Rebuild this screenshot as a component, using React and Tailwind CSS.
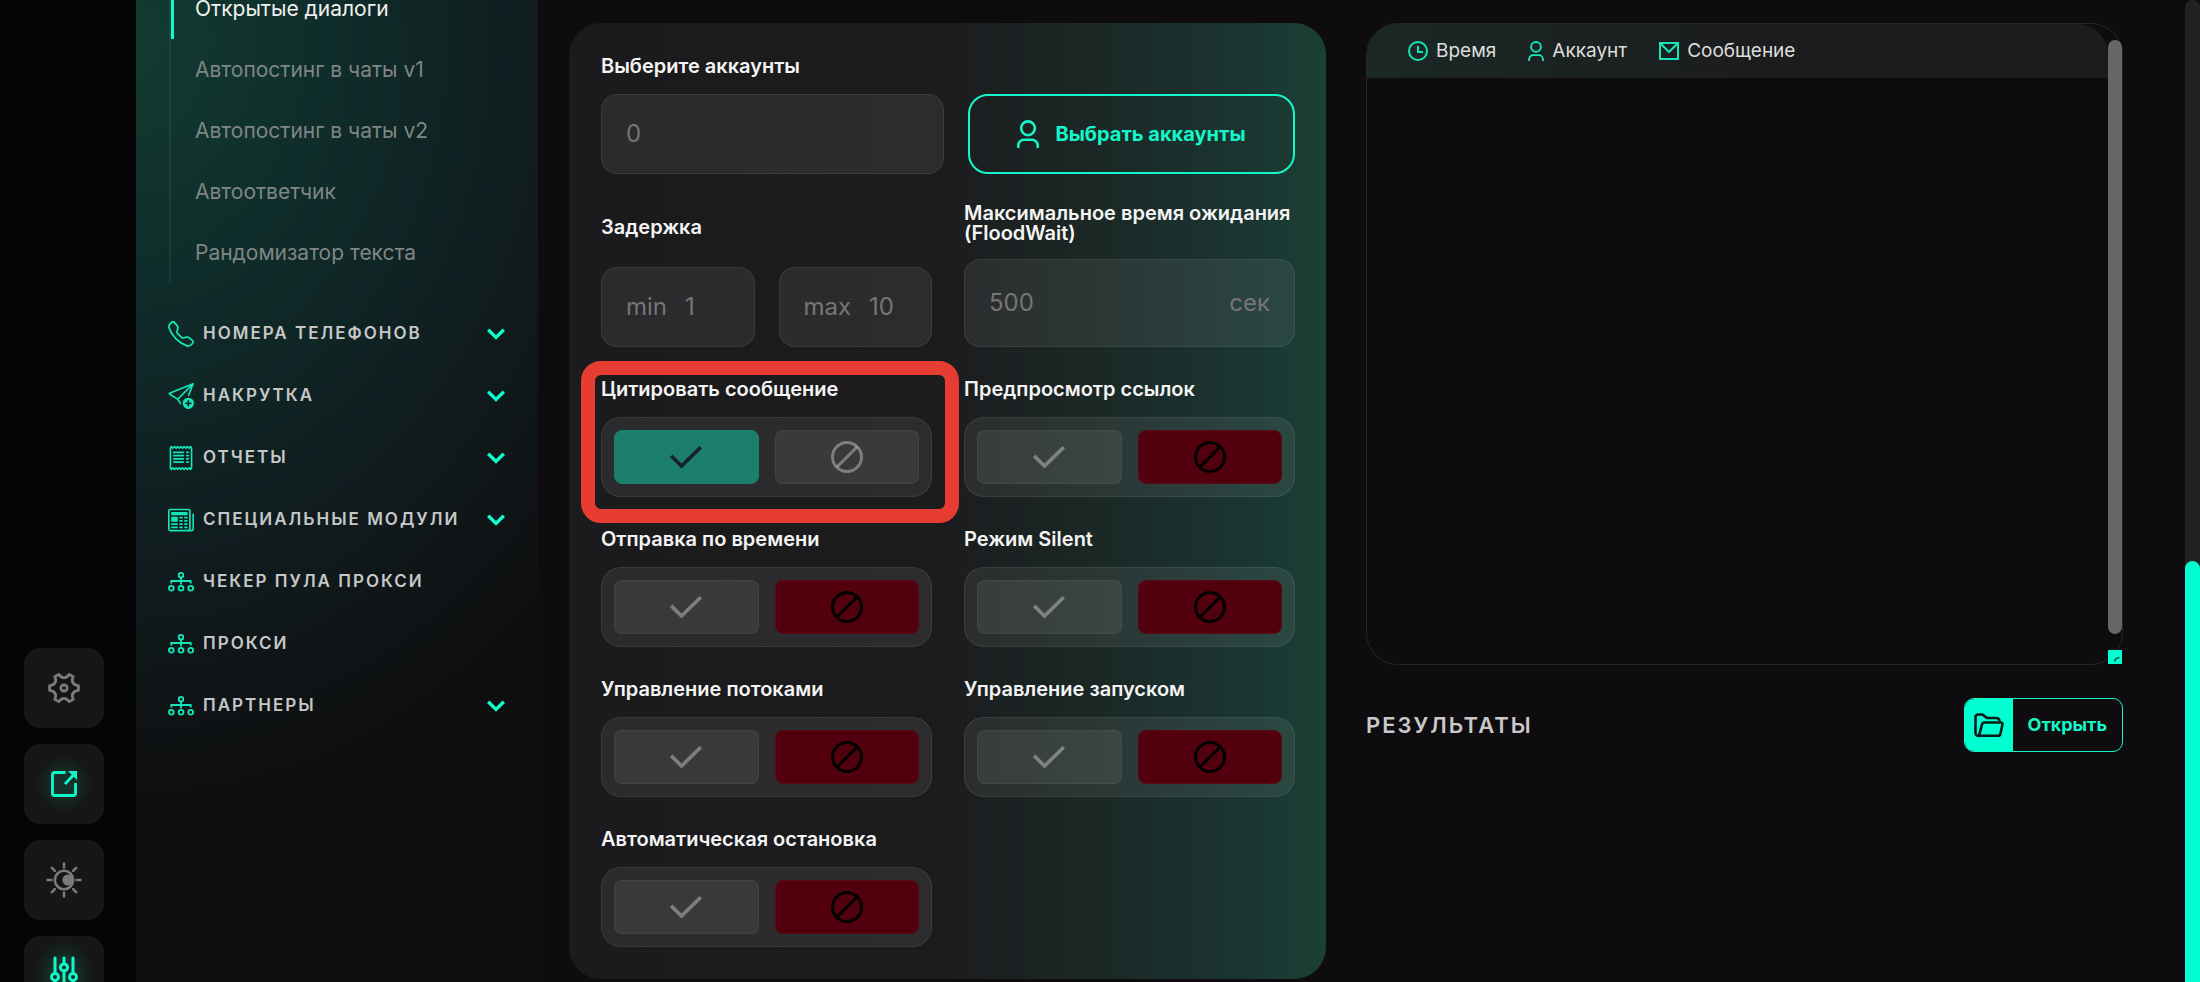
import React, { useState } from 'react';
import clsx from 'clsx';
import { BsNewspaper, BsReceipt, BsSendPlus, BsTelephone } from 'react-icons/bs';

const subItems = [
    'Открытые диалоги',
    'Автопостинг в чаты v1',
    'Автопостинг в чаты v2',
    'Автоответчик',
    'Рандомизатор текста',
];

const OrgIcon = () => (
    <svg viewBox="0 0 26 20" className="w-[26px] h-5" fill="none" stroke="currentColor" strokeWidth="1.8">
        <circle cx="13" cy="3.2" r="2.3" />
        <path d="M13 5.6V12.5M3.3 11.5V9h19.4v2.5" />
        <circle cx="3.3" cy="16.2" r="2.4" />
        <circle cx="13" cy="16.2" r="2.4" />
        <circle cx="22.7" cy="16.2" r="2.4" />
    </svg>
);

const menu = [
    { title: 'Номера телефонов', icon: <BsTelephone className="w-[26px] h-[26px]" />, open: true },
    { title: 'Накрутка', icon: <BsSendPlus className="w-[26px] h-[26px]" />, open: true },
    { title: 'Отчеты', icon: <BsReceipt className="w-[26px] h-[26px]" />, open: true },
    { title: 'Специальные модули', icon: <BsNewspaper className="w-[26px] h-[26px]" />, open: true },
    { title: 'Чекер пула прокси', icon: <OrgIcon /> },
    { title: 'Прокси', icon: <OrgIcon /> },
    { title: 'Партнеры', icon: <OrgIcon />, open: true },
];

const Chevron = () => (
    <svg viewBox="0 0 18 12" className="w-[18px] h-3 shrink-0 text-[#0fffd0]" fill="none" stroke="currentColor" strokeWidth="3.4">
        <path d="M1.2 1.8 9 9.4l7.8-7.6" />
    </svg>
);

const UserIcon = ({ className }) => (
    <svg viewBox="0 0 22 28" className={className} fill="none" stroke="currentColor" strokeWidth="2.6">
        <circle cx="11" cy="8.3" r="6.9" />
        <path d="M1.3 28v-2.500a5.800 5.800 0 0 1 5.800-5.800h7.800a5.800 5.800 0 0 1 5.800 5.800V28" />
    </svg>
);

const ClockIcon = () => (
    <svg viewBox="0 0 20 20" className="w-5 h-5" fill="none" stroke="currentColor" strokeWidth="2">
        <circle cx="10" cy="10" r="9" />
        <path d="M10 5v6h5" />
    </svg>
);

const MailIcon = () => (
    <svg viewBox="0 0 20 18" className="w-5 h-[18px]" fill="none" stroke="currentColor" strokeWidth="2">
        <path d="M1 1h18v16H1zM1.5 1.5 10 10l8.5-8.5" />
    </svg>
);

const CheckIcon = () => (
    <svg viewBox="0 0 32 22" className="w-8 h-[22px]" fill="none" stroke="currentColor" strokeWidth="3.6">
        <path d="M1.2 9.8 11.5 20 30.8 1.2" />
    </svg>
);

const BanIcon = () => (
    <svg viewBox="0 0 32 32" className="w-8 h-8" fill="none" stroke="currentColor" strokeWidth="3">
        <circle cx="16" cy="16" r="14.5" />
        <path d="M6 26 26 6" />
    </svg>
);

const FolderIcon = () => (
    <svg viewBox="0 0 30 25" className="w-[30px] h-[25px]" fill="none" stroke="currentColor" strokeWidth="2.6" strokeLinejoin="round">
        <path d="M5 23a3 3 0 0 1-3.500-3V4A2.500 2.500 0 0 1 4 1.500h4.500L13 5h9a3.500 3.500 0 0 1 3.500 3" />
        <path d="M10.500 9.500H27a1.500 1.500 0 0 1 1.500 1.800l-2 9.200a2.500 2.500 0 0 1-2.500 2.200H5l3-11.200a2.700 2.700 0 0 1 2.500-2z" />
    </svg>
);

// six blunt teeth joined by concave valleys
const polar = (r, deg) => {
    const a = (deg * Math.PI) / 180;
    return `${(16 + r * Math.cos(a)).toFixed(2)} ${(16 + r * Math.sin(a)).toFixed(2)}`;
};
const gearPath = `M${polar(14.6, -9)}${[0, 60, 120, 180, 240, 300]
    .map((t) => `L${polar(14.6, t + 9)}C${polar(9.5, t + 17)} ${polar(9.5, t + 43)} ${polar(14.6, t + 51)}`)
    .join('')}Z`;

const GearIcon = () => (
    <svg viewBox="0 0 32 32" className="w-8 h-8" fill="none" stroke="currentColor" strokeWidth="2.8" strokeLinejoin="round">
        <path d={gearPath} />
        <circle cx="16" cy="16" r="3.2" />
    </svg>
);

const OpenIcon = () => (
    <svg viewBox="0 0 26 26" className="w-[26px] h-[26px]" fill="none" stroke="currentColor" strokeWidth="2.8">
        <path d="M14.5 1.5h-11a2 2 0 0 0-2 2v19a2 2 0 0 0 2 2h19a2 2 0 0 0 2-2V12" />
        <path d="M14 13 23 3.5" />
        <path d="M17 0h9v9z" fill="currentColor" stroke="none" />
    </svg>
);

const SunIcon = () => (
    <svg viewBox="0 0 36 36" className="w-9 h-9" fill="none" stroke="currentColor" strokeWidth="2.6" strokeLinecap="round">
        <circle cx="18" cy="18" r="9.2" />
        <circle cx="22" cy="18" r="5.6" fill="currentColor" stroke="none" />
        <path d="M18 1.500v4M18 30.500v4M1.500 18h4M30.500 18h4M5.800 5.800l3 3M27.200 27.200l3 3M5.800 30.200l3-3M27.200 8.800l3-3" />
    </svg>
);

const SlidersIcon = () => (
    <svg viewBox="0 0 28 40" className="w-7 h-10" fill="none" stroke="currentColor" strokeWidth="3" strokeLinecap="round">
        <path d="M5 2v15M5 25v13M14 2v5.500M14 15v23M23 2v15M23 25v13" />
        <circle cx="5" cy="21" r="3.5" />
        <circle cx="14" cy="11.5" r="3.5" />
        <circle cx="23" cy="21" r="3.5" />
    </svg>
);

const rail = [
    { name: 'Настройки', icon: <GearIcon /> },
    { name: 'Открыть в новом окне', icon: <OpenIcon />, active: true },
    { name: 'Тема', icon: <SunIcon /> },
    { name: 'Параметры', icon: <SlidersIcon />, active: true },
];

const Label = ({ children, ...rest }) => (
    <span className="block text-xl leading-6 font-semibold text-[#f4f4f4]" {...rest}>{children}</span>
);

const box = 'flex items-center rounded-2xl border border-white/8 bg-white/7 px-6 text-2xl text-[#777578]';
const field = 'min-w-0 flex-1 bg-transparent outline-none placeholder:text-[#777578]';

const Toggle = ({ id, label, initial = false, highlighted }) => {
    const [on, setOn] = useState(initial);
    const base = 'flex-1 flex items-center justify-center rounded-lg border cursor-pointer';
    const idle = 'bg-white/7 border-white/5 text-white/35';

    return (
        <div className="relative">
            <Label id={id}>{label}</Label>
            <div
                role="group"
                aria-labelledby={id}
                className="mt-4 h-20 flex gap-4 rounded-[20px] border border-white/8 bg-white/7 p-3"
            >
                <button
                    type="button"
                    aria-label="Включить"
                    aria-pressed={on}
                    onClick={() => setOn(true)}
                    className={clsx(base, on ? 'bg-[#1c7f6c] border-[#1c7f6c] text-[#14222b]' : idle)}
                >
                    <CheckIcon />
                </button>
                <button
                    type="button"
                    aria-label="Выключить"
                    aria-pressed={!on}
                    onClick={() => setOn(false)}
                    className={clsx(base, on ? idle : 'bg-[#52000d] border-[#5c0a16] text-black')}
                >
                    <BanIcon />
                </button>
            </div>
            {highlighted && (
                <div className="absolute z-10 -left-5 -right-[27px] -top-4 -bottom-[26px] rounded-[20px] border-[14px] border-[#e63c31] pointer-events-none" />
            )}
        </div>
    );
};

const Rail = () => (
    <aside className="w-[136px] shrink-0 h-full bg-[#050505] flex flex-col justify-end">
        <div className="flex flex-col gap-4 pl-6 -mb-[34px]">
            {rail.map((item) => (
                <button
                    key={item.name}
                    type="button"
                    aria-label={item.name}
                    className={clsx(
                        'w-20 h-20 rounded-2xl bg-[#161616] flex items-center justify-center',
                        item.active ? 'text-[#14f7c9]' : 'text-[#7b7b7b]'
                    )}
                >
                    <span className={item.active ? 'rounded-full bg-[#14f7c9]/12 shadow-[0_0_16px_6px_rgba(20,247,201,0.14)]' : ''}>
                        {item.icon}
                    </span>
                </button>
            ))}
        </div>
    </aside>
);

const Sidebar = () => (
    <nav className="w-[402px] shrink-0 h-full overflow-hidden bg-[#0f0f10] bg-[radial-gradient(600px_760px_at_0%_4%,#123b30_0%,#0f2e2b_30%,#101c1f_68%,#0f0f10_100%)]">
        <ul className="-mt-[22px] ml-[33px] border-l-2 border-white/5">
            {subItems.map((item, i) => (
                <li key={item}>
                    <a
                        href="#"
                        className={clsx(
                            'flex items-center h-[61px] border-l-3 pl-[21px] text-[21px] leading-none',
                            i === 0 ? 'border-[#14f7c9] text-[#f0f0f0]' : 'border-transparent text-[#7f8685]'
                        )}
                    >
                        {item}
                    </a>
                </li>
            ))}
        </ul>
        <ul className="mt-5 pl-8 pr-[33px]">
            {menu.map((item) => (
                <li key={item.title}>
                    <a href="#" className="flex items-center h-[62px] gap-[9px] text-[#14e6b8]">
                        <span className="w-[26px] flex justify-center">{item.icon}</span>
                        <span className="flex-1 text-[17px] font-semibold tracking-[2px] uppercase text-[#c6c8c8] whitespace-nowrap">
                            {item.title}
                        </span>
                        {item.open && <Chevron />}
                    </a>
                </li>
            ))}
        </ul>
    </nav>
);

const SettingsPanel = () => (
    <form className="rounded-[32px] pl-8 pr-[31px] pt-[31px] pb-8 bg-[linear-gradient(90deg,#1b1a1d_0%,#1c1b1e_48%,#1b2826_70%,#1a3632_90%,#1b4034_100%)]">
        <label htmlFor="accounts"><Label>Выберите аккаунты</Label></label>
        <div className="mt-4 flex gap-6">
            <div className={clsx(box, 'flex-1 min-w-0 h-20')}>
                <input id="accounts" className={field} placeholder="0" />
            </div>
            <button
                type="button"
                className="w-[327px] shrink-0 h-20 rounded-[20px] border-2 border-[#14f7c9] flex items-center justify-center gap-4 text-xl font-bold text-[#14f7c9]"
            >
                <UserIcon className="w-[22px] h-7" />
                Выбрать аккаунты
            </button>
        </div>

        <div className="mt-[29px] grid grid-cols-2 gap-x-8 gap-y-[30px]">
            <div className="flex flex-col justify-between">
                <div className="pt-3"><Label>Задержка</Label></div>
                <div className="flex gap-6">
                    <label className={clsx(box, 'flex-1 min-w-0 h-20 gap-[18px]')}>
                        min
                        <input className={field} placeholder="1" />
                    </label>
                    <label className={clsx(box, 'flex-1 min-w-0 h-20 gap-[18px]')}>
                        max
                        <input className={field} placeholder="10" />
                    </label>
                </div>
            </div>
            <div>
                <label htmlFor="flood" className="block text-xl leading-5 font-semibold text-[#f4f4f4]">
                    Максимальное время ожидания (FloodWait)
                </label>
                <div className={clsx(box, 'mt-4 h-[88px]')}>
                    <input id="flood" className={field} placeholder="500" />
                    <span>сек</span>
                </div>
            </div>

            <Toggle id="quote" label="Цитировать сообщение" initial={true} highlighted />
            <Toggle id="preview" label="Предпросмотр ссылок" />
            <Toggle id="timed" label="Отправка по времени" />
            <Toggle id="silent" label="Режим Silent" />
            <Toggle id="threads" label="Управление потоками" />
            <Toggle id="launch" label="Управление запуском" />
            <Toggle id="autostop" label="Автоматическая остановка" />
        </div>
    </form>
);

const columns = [
    { title: 'Время', icon: <ClockIcon /> },
    { title: 'Аккаунт', icon: <UserIcon className="w-4 h-5" /> },
    { title: 'Сообщение', icon: <MailIcon /> },
];

const LogPanel = () => (
    <section>
        <div className="h-[642px] flex rounded-[32px] border border-[#262427]">
            <div className="flex-1 overflow-hidden rounded-t-[31px]">
                <table className="w-full text-left">
                    <thead>
                        <tr className="h-[54px] bg-[linear-gradient(90deg,#1a2826_0%,#1b2221_30%,#1c1b1e_55%,#1c1b1e_100%)]">
                            {columns.map((col) => (
                                <th
                                    key={col.title}
                                    className="px-4 first:pl-[41px] last:w-full text-[19px] leading-6 font-normal text-[#dedede] whitespace-nowrap"
                                >
                                    <span className="flex items-center gap-2">
                                        <span className="text-[#14e6b8]">{col.icon}</span>
                                        {col.title}
                                    </span>
                                </th>
                            ))}
                        </tr>
                    </thead>
                    <tbody />
                </table>
            </div>
            <div className="w-[14px] shrink-0 flex flex-col pt-4 gap-4">
                <div className="flex-1 rounded-full bg-[#69666a]" />
                <div className="h-[14px] bg-[#00ffd1] text-[#0e4a40]">
                    <svg viewBox="0 0 14 14" className="w-[14px] h-[14px]" fill="none" stroke="currentColor" strokeWidth="1.4">
                        <path d="M6.5 11.5C7 9 8.5 8 11.5 7.5" />
                    </svg>
                </div>
            </div>
        </div>

        <div className="mt-[33px] flex items-center justify-between">
            <h2 className="text-[22px] font-semibold tracking-[2px] uppercase text-[#c9c9c9]">Результаты</h2>
            <button
                type="button"
                className="h-[54px] flex rounded-[10px] border border-[#14f7c9] overflow-hidden text-lg font-bold text-[#14f7c9]"
            >
                <span className="w-12 h-full bg-[#00ffd1] text-[#0c1a18] flex items-center justify-center">
                    <FolderIcon />
                </span>
                <span className="h-full px-[15px] flex items-center">Открыть</span>
            </button>
        </div>
    </section>
);

const App = () => (
    <div className="h-screen overflow-hidden flex bg-[#0e0c0f] font-['Inter',sans-serif]">
        <Rail />
        <Sidebar />
        <main className="flex-1 min-w-0 grid grid-cols-2 gap-10 items-start pt-[23px] pl-[31px] pr-[62px]">
            <SettingsPanel />
            <LogPanel />
        </main>
        <div className="w-[15px] shrink-0 h-full rounded-t-full bg-[#232124] flex flex-col justify-end">
            <div className="h-3/7 rounded-t-full bg-[#00ffd1]" />
        </div>
    </div>
);

export default App;
